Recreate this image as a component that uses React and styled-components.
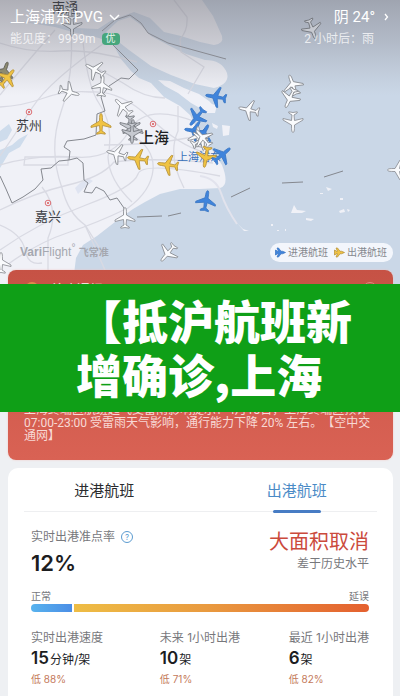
import React, { useState } from 'react';
import styled, { createGlobalStyle } from 'styled-components';

const planes = [
    { x: 70, y: 17, r: 180, c: 'grey' },
    { x: 72, y: 26, r: 180, c: 'grey' },
    { x: 4, y: 72, r: 20, c: 'dark' },
    { x: 7, y: 78, r: 40, c: 'yellow' },
    { x: 95, y: 70, r: -60, c: 'white' },
    { x: 102, y: 86, r: 5, c: 'white' },
    { x: 69, y: 92, r: 105, c: 'white' },
    { x: 123, y: 107, r: -45, c: 'white' },
    { x: 101, y: 124, r: 0, c: 'yellow' },
    { x: 130, y: 126, r: 180, c: 'grey' },
    { x: 133, y: 130, r: 0, c: 'grey' },
    { x: 132, y: 133, r: 180, c: 'grey' },
    { x: 117, y: 154, r: -75, c: 'white' },
    { x: 138, y: 159, r: -82, c: 'yellow' },
    { x: 168, y: 165, r: -82, c: 'yellow' },
    { x: 125, y: 218, r: 0, c: 'white' },
    { x: 168, y: 253, r: -140, c: 'white' },
    { x: 312, y: 29, r: 160, c: 'grey' },
    { x: 293, y: 85, r: -20, c: 'white' },
    { x: 290, y: 98, r: 205, c: 'white' },
    { x: 293, y: 122, r: 180, c: 'white' },
    { x: 249, y: 110, r: -78, c: 'white' },
    { x: 216, y: 97, r: -80, c: 'blue' },
    { x: 197, y: 117, r: -140, c: 'blue' },
    { x: 195, y: 131, r: -80, c: 'blue' },
    { x: 203, y: 134, r: 30, c: 'blue' },
    { x: 198, y: 137, r: 0, c: 'white' },
    { x: 201, y: 140, r: 60, c: 'white' },
    { x: 203, y: 138, r: -40, c: 'white' },
    { x: 206, y: 157, r: 190, c: 'yellow' },
    { x: 222, y: 155, r: 50, c: 'blue' },
    { x: 206, y: 201, r: 10, c: 'blue' },
    { x: 398, y: 170, r: -90, c: 'white' },
    { x: 1, y: 263, r: 0, c: 'white' },
];

const planeColors = {
    white: { fill: '#fafbfd', stroke: '#85888e' },
    grey: { fill: '#c6c9d0', stroke: '#6f7278' },
    dark: { fill: '#8d8a70', stroke: '#5c5b55' },
    yellow: { fill: '#f0c343', stroke: '#b5913a' },
    blue: { fill: '#3f84dc', stroke: '#3b76c2' },
};

const cities = [
    { name: '南通', x: 65, y: 12, size: 13 },
    { name: '苏州', x: 29, y: 130, size: 13, dot: [29, 112] },
    { name: '上海', x: 154, y: 143, size: 15, strong: true, dot: [153, 124] },
    { name: '嘉兴', x: 48, y: 221, size: 13, dot: [48, 203] },
];

const stats = [
    { label: '实时出港速度', value: '15', unit: '分钟/架', note: '低 88%' },
    { label: '未来 1小时出港', value: '10', unit: '架', note: '低 71%' },
    { label: '最近 1小时出港', value: '6', unit: '架', note: '低 82%' },
];

const onTime = 12;

const planePath = 'M0-10.500C1-10.500 1.400-8.500 1.400-6.500L1.500-3L10 2V3.500L1.500 1.500L1 7L4.200 9V10.200L0 9.500L-4.200 10.200V9L-1 7L-1.500 1.500L-10 3.500V2L-1.500-3L-1.400-6.500C-1.400-8.500-1-10.500 0-10.500Z';

function Plane({ x, y, r, c }) {
    return <path d={planePath} transform={`translate(${x} ${y}) rotate(${r})`} strokeWidth="0.8" {...planeColors[c]} />;
}

function FlightMap() {
    return (
        <MapCanvas viewBox="0 0 400 290" preserveAspectRatio="xMidYMin slice" role="img" aria-label="航班地图">
            <defs>
                <linearGradient id="shade" x1="0" y1="0" x2="0" y2="1">
                    <stop offset="0" stopColor="#83838c" stopOpacity=".6" />
                    <stop offset=".45" stopColor="#8c8c95" stopOpacity=".38" />
                    <stop offset="1" stopColor="#9a9ba3" stopOpacity="0" />
                </linearGradient>
            </defs>
            <rect width="400" height="290" fill="#cad7e7" />
            <g fill="#f0f1f7">
                <path d="M0 0H202L213 16L222 36Q224 44 214 45L200 42L181 36L164 32L150 18L134 12L112 20L98 29L76 28L55 24L0 20Z" />
                <path d="M0 18L55 27L76 33L99 38L113 44L121 59L131 71L139 78L151 83L164 97L180 106L190 115L196 127L202 138L213 151L222 165Q230 185 220 188L200 189L180 189L160 194L145 202L133 209L115 222L97 236L83 245L76 258L72 290H0Z" />
                <path d="M106 32L118 21L130 17L141 25L151 36L170 46L186 54L205 60Q222 60 227 73Q230 84 214 88L195 84L171 75L151 66L129 50Z" />
                <path d="M158 80L170 81L184 88L199 94L209 101L216 108L205 111L191 103L178 93L165 86Z" />
                <path d="M203 103L217 105L215 113L206 113Z" />
                <path d="M212 123L218 126L217 129L213 127ZM222 125L230 126L229 135L223 136Z" />
                <path d="M294 205L297 210L306 211L302 213H291ZM306 218L314 219L311 221L306 220ZM326 187L332 189L328 191ZM339 211L344 209L345 212L340 213ZM347 209L350 210L348 212ZM237 223L243 229L249 231L244 231ZM271 224h2v2h-2zM277 230h2v1h-2zM285 229h1v2h-1zM340 198h3v2h-3zM320 193h3v1h-3z" />
            </g>
            <g fill="#cedcec">
                <path d="M0 131L9 124L12 130L7 139L0 142ZM28 134L20 147L9 153L0 168V150L12 145L19 139Z" />
                <path d="M80 183L88 178L93 181L84 188L78 194L75 188Z" fill="#dfe4f1" />
            </g>
            <g fill="none" stroke="#d9dae3" strokeWidth="1.300">
                <path d="M0 107Q22 106 44 98T91 92Q120 90 150 118T204 152" />
                <path d="M0 43Q30 53 60 51T137 62M55 30Q20 70 0 95M110 39Q50 80 32 108T0 156" />
                <path d="M71 31Q74 75 61 112T62 188Q68 213 85 225L104 255" />
                <path d="M0 210Q34 193 68 185T114 162Q153 157 213 163" />
                <path d="M7 265Q37 243 67 233T128 208Q151 191 153 170T132 135" />
                <path d="M0 165Q37 154 75 157T129 131T196 122" />
                <path d="M82 30Q86 85 100 105T108 157Q109 180 132 202M42 187Q60 209 48 238V270" />
                <path d="M0 250Q38 223 86 205T138 174T220 176M25 157H68V165H24Z" />
                <path d="M178 106V131Q167 155 184 188M174 0L187 17Q188 31 180 39L181 52L204 67L188 94" />
                <path d="M104 145Q153 145 193 137M93 66L123 83Q144 98 165 98M0 225Q22 234 25 250T42 263" />
                <path d="M200 176Q216 178 221 193T237 224" stroke="#e2e3ed" strokeWidth="2" />
                <path d="M85 225L105 270" />
            </g>
            <g fill="none" stroke="#85888f" strokeWidth="1">
                <path d="M102 31L115 20L130 15L141 23L148 33L168 43L226 59M110 42L138 70L129 79L121 78L109 86L101 97L105 111L97 114L96 135L84 139L67 141L64 147L70 151L69 160L59 161L51 168L41 169L43 180L35 189L23 197L12 203L6 189L0 176" />
                <path d="M69 160L77 158L83 163L84 180L88 183L84 192L92 193L96 187L104 191L110 200L117 198L124 208V217" />
                <path d="M137 217L162 216M168 216L181 213M231 197L250 188M282 183L303 182M324 177L343 171" />
            </g>
            <rect width="400" height="95" fill="url(#shade)" />
            {cities.filter(c => c.dot).map(c => (
                <g key={c.name} fill="none" stroke="#dd7075">
                    <circle cx={c.dot[0]} cy={c.dot[1]} r="2.800" />
                    <circle cx={c.dot[0]} cy={c.dot[1]} r="1" fill="#d55" stroke="none" />
                </g>
            ))}
            {cities.map(c => (
                <CityName key={c.name} x={c.x} y={c.y} $size={c.size} $strong={c.strong}>{c.name}</CityName>
            ))}
            <AirportName x="199" y="161">上海浦东</AirportName>
            {planes.map((p, i) => <Plane key={i} {...p} />)}
        </MapCanvas>
    );
}

function LegendPlane({ color }) {
    return (
        <svg width="11" height="11" viewBox="-11 -11 22 22" aria-hidden="true">
            <path d="M10 0L4-2.500H1L-4-9H-7L-4-2.500H-7L-9-5H-10V5H-9L-7 2.500H-4L-7 9H-4L1 2.500H4Z" strokeWidth="1.500" strokeLinejoin="round" {...planeColors[color]} />
        </svg>
    );
}

export default function App() {
    const [tab, setTab] = useState('out');

    return (
        <Page>
            <GlobalStyle />
            <Hero>
                <FlightMap />
                <TopBar>
                    <div>
                        <Airport type="button">
                            上海浦东 PVG
                            <svg width="11" height="7" viewBox="0 0 11 7" fill="none" stroke="#fff" strokeWidth="1.500"><path d="M1 1L5.500 5.500L10 1" /></svg>
                        </Airport>
                        <SubLine>能见度：9999m <Grade>优</Grade></SubLine>
                    </div>
                    <Weather>
                        <Airport type="button">
                            阴 24°
                            <WeatherArrow width="5" height="8" viewBox="0 0 5 8" fill="none" stroke="#fff" strokeWidth="1.300"><path d="M1 1L3.500 4L1 7" /></WeatherArrow>
                        </Airport>
                        <SubLine>2 小时后：雨</SubLine>
                    </Weather>
                </TopBar>
                <MapFooter>
                    <Brand><b>Vari</b>Flight<sup>°</sup> <BrandCn>飞常准</BrandCn></Brand>
                    <Legend>
                        <LegendItem><LegendPlane color="blue" />进港航班</LegendItem>
                        <LegendItem><LegendPlane color="yellow" />出港航班</LegendItem>
                    </Legend>
                </MapFooter>
            </Hero>

            <AlertArea>
                <AlertCard>
                    <AlertHead>
                        <AlertDot />
                        <AlertTitle>航班通报</AlertTitle>
                        <AlertClose type="button" aria-label="关闭" />
                    </AlertHead>
                    <AlertText>
                        上海终端区航班起飞受雷雨影响提示：4月18日，上海终端区预计 07:00-23:00 受雷雨天气影响，通行能力下降 20% 左右。【空中交通网】
                    </AlertText>
                </AlertCard>
                <Banner>
                    <Headline>【抵沪航班新<br />增确诊,上海</Headline>
                </Banner>
            </AlertArea>

            <Card>
                <Tabs role="tablist">
                    <Tab type="button" role="tab" aria-selected={tab === 'in'} $active={tab === 'in'} onClick={() => setTab('in')}>进港航班</Tab>
                    <Tab type="button" role="tab" aria-selected={tab === 'out'} $active={tab === 'out'} onClick={() => setTab('out')}>出港航班</Tab>
                </Tabs>
                <Summary>
                    <div>
                        <RateLabel>
                            实时出港准点率
                            <Help type="button" aria-label="说明">?</Help>
                        </RateLabel>
                        <Rate>12%</Rate>
                    </div>
                    <Status>
                        <StatusTitle>大面积取消</StatusTitle>
                        <StatusNote>差于历史水平</StatusNote>
                    </Status>
                </Summary>
                <Scale><span>正常</span><span>延误</span></Scale>
                <Bar>
                    <BarNormal style={{ width: `${onTime}%` }} />
                    <BarDelay />
                </Bar>
                <Stats>
                    {stats.map(s => (
                        <div key={s.label}>
                            <StatLabel>{s.label}</StatLabel>
                            <StatValue>{s.value}<StatUnit>{s.unit}</StatUnit></StatValue>
                            <StatNote>{s.note}</StatNote>
                        </div>
                    ))}
                </Stats>
            </Card>
        </Page>
    );
}

const GlobalStyle = createGlobalStyle`
* {
    box-sizing: border-box;
}
body {
    margin: 0;
    background-color: #eef0f3;
    font-family: Inter, "Noto Sans CJK SC", sans-serif;
}
button {
    padding: 0;
    border: 0;
    background: none;
    font-family: inherit;
    cursor: pointer;
}
`
const Page = styled.main`
min-height: 100vh;
display: flex;
flex-direction: column;
overflow: hidden;
`
const Hero = styled.section`
position: relative;
min-height: 270px;
display: flex;
flex-direction: column;
justify-content: space-between;
`
const MapCanvas = styled.svg`
position: absolute;
top: 0;
left: 0;
width: 100%;
height: 290px;
`
const CityName = styled.text`
font-size: ${p => p.$size}px;
font-weight: ${p => p.$strong ? 500 : 400};
fill: ${p => p.$strong ? '#1d1e22' : '#3d3f45'};
text-anchor: middle;
`
const AirportName = styled.text`
font-size: 11px;
fill: #3a71ba;
text-anchor: middle;
`
const TopBar = styled.header`
position: relative;
display: flex;
justify-content: space-between;
padding: 6px 10px;
color: #fff;
`
const Airport = styled.button`
display: flex;
align-items: center;
gap: 6px;
font-family: Roboto, "Noto Sans CJK SC", sans-serif;
font-size: 15px;
line-height: 22px;
color: #fff;
`
const SubLine = styled.div`
display: flex;
align-items: center;
gap: 6px;
font-family: Roboto, "Noto Sans CJK SC", sans-serif;
font-size: 12px;
line-height: 22px;
color: rgba(255, 255, 255, .75);
`
const Weather = styled.div`
display: flex;
flex-direction: column;
align-items: flex-end;

${SubLine} {
    padding-right: 16px;
}
`
const WeatherArrow = styled.svg`
margin: 0 1px 0 3px;
`
const Grade = styled.span`
padding: 0 4px;
border-radius: 4px;
font-size: 10px;
line-height: 12px;
color: #e6f5ee;
background-color: #46a67c;
`
const MapFooter = styled.div`
position: relative;
display: flex;
align-items: center;
justify-content: space-between;
padding: 0 7px 8px 20px;
`
const Brand = styled.div`
font-family: "Liberation Sans", "Noto Sans CJK SC", sans-serif;
font-size: 12px;
line-height: 18px;
color: #a5a8b0;

sup {
    line-height: 0;
}
`
const BrandCn = styled.span`
font-size: 10px;
font-weight: 700;
`
const Legend = styled.div`
display: flex;
gap: 6px;
padding: 0 6px 0 5px;
border-radius: 10px;
line-height: 19px;
background-color: rgba(250, 252, 255, .85);
`
const LegendItem = styled.span`
display: flex;
align-items: center;
gap: 2px;
font-size: 10px;
color: #85888e;
`
const AlertArea = styled.section`
position: relative;
padding: 0 7px 0 8px;
`
const AlertCard = styled.div`
min-height: 190px;
display: flex;
flex-direction: column;
justify-content: space-between;
padding: 10px 16px 17px;
border-radius: 8px;
background: linear-gradient(#c65245, #d96254);
box-shadow: 0 0 2px #f3c3bd;
`
const AlertHead = styled.div`
display: flex;
align-items: center;
`
const AlertDot = styled.span`
width: 14px;
height: 14px;
margin: 0 12px 0 1px;
border-radius: 50%;
background-color: #e08a4c;
`
const AlertTitle = styled.h2`
flex: 1;
margin: 0;
font-size: 13px;
line-height: 18px;
font-weight: 500;
color: #f6dcd9;
`
const AlertClose = styled.button`
width: 14px;
height: 14px;
border: 1px solid #de8a80;
border-radius: 50%;
`
const AlertText = styled.p`
margin: 0;
font-family: Roboto, "Noto Sans CJK SC", sans-serif;
font-size: 12px;
line-height: 13px;
text-spacing-trim: space-all;
color: #f8d9d5;
`
const Banner = styled.div`
position: absolute;
top: 14px;
left: 0;
right: 0;
height: 128px;
padding: 8px 0 0 76px;
background-color: #0f9f17;
`
const Headline = styled.h1`
margin: 0;
font-family: "Noto Sans CJK SC", sans-serif;
font-size: 46px;
line-height: 54px;
font-weight: 900;
color: #fff;
white-space: nowrap;
`
const Card = styled.section`
flex: 1;
margin: 8px 7px 0 8px;
border-radius: 10px 10px 0 0;
background-color: #fff;
`
const Tabs = styled.div`
display: flex;
background: linear-gradient(#eeeff1, #eeeff1) center bottom 1px / calc(100% - 32px) 1px no-repeat;
`
const Tab = styled.button`
flex: 1;
display: flex;
flex-direction: column;
align-items: center;
padding-top: 12px;
font-size: 15px;
line-height: 22px;
color: ${p => p.$active ? '#4a8ac6' : '#2a2b2e'};

&::after {
    content: '';
    width: 48px;
    height: 3px;
    margin-top: 8px;
    border-radius: 2px;
    background-color: ${p => p.$active ? '#477cc4' : 'transparent'};
}
`
const Summary = styled.div`
display: flex;
justify-content: space-between;
padding: 15px 24px 0 23px;
`
const RateLabel = styled.div`
display: flex;
align-items: center;
gap: 6px;
font-size: 12px;
line-height: 18px;
color: #77787c;
`
const Help = styled.button`
width: 12px;
height: 12px;
border: 1px solid #5b9bd0;
border-radius: 50%;
font-size: 8px;
line-height: 10px;
color: #5b9bd0;
`
const Rate = styled.div`
margin-top: 3px;
font-size: 22px;
line-height: 28px;
font-weight: 600;
color: #1c1d1f;
`
const Status = styled.div`
text-align: right;
`
const StatusTitle = styled.div`
font-size: 20px;
line-height: 28px;
color: #cb4a3c;
`
const StatusNote = styled.div`
font-size: 12px;
line-height: 16px;
color: #77787c;
`
const Scale = styled.div`
display: flex;
justify-content: space-between;
padding: 12px 24px 0 23px;
font-size: 10px;
line-height: 14px;
color: #77787c;
`
const Bar = styled.div`
display: flex;
gap: 2px;
height: 8px;
margin: 1px 24px 0 23px;
border-radius: 4px;
overflow: hidden;
`
const BarNormal = styled.div`
background: linear-gradient(90deg, #58b3ee, #4b8ee6);
`
const BarDelay = styled.div`
flex: 1;
background: linear-gradient(90deg, #eebd45, #e99a3f 45%, #e4602f);
`
const Stats = styled.div`
display: grid;
grid-template-columns: 1fr 1fr auto;
padding: 17px 24px 8px 23px;
`
const StatLabel = styled.div`
font-size: 12px;
line-height: 18px;
color: #77787c;
`
const StatValue = styled.div`
font-size: 17px;
line-height: 22px;
font-weight: 600;
color: #1c1d1f;
`
const StatUnit = styled.span`
margin-left: 1px;
font-size: 12px;
font-weight: 400;
`
const StatNote = styled.div`
font-size: 10px;
line-height: 16px;
color: #c4795a;
`
